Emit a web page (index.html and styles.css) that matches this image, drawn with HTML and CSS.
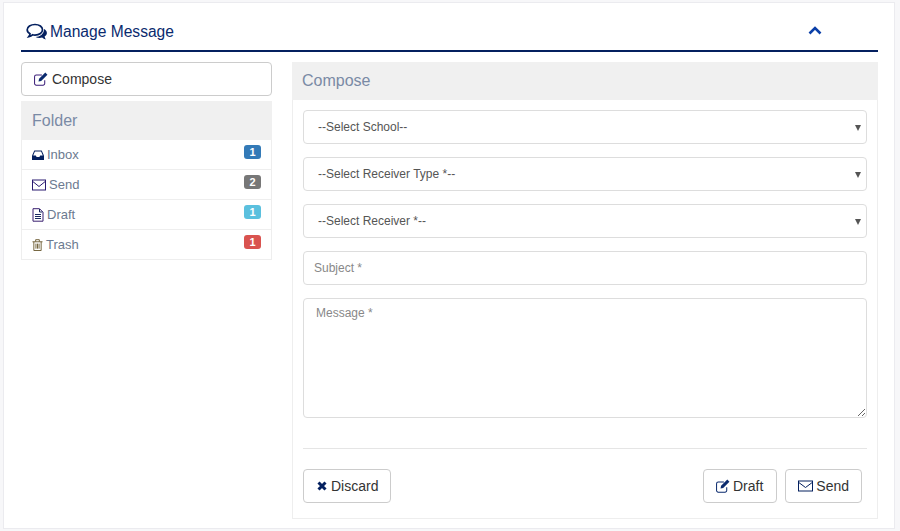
FILE: index.html
```html
<!DOCTYPE html>
<html lang="en">
<head>
    <meta charset="UTF-8">
    <title>Manage Message</title>
    <link rel="stylesheet" href="styles.css">
</head>
<body>
    <main class="card">
        <header class="card-head">
            <h1 class="card-title">
                <svg class="ico-title" viewBox="0 0 22 18"><path d="M9 1.500c4.400 0 7.500 2.400 7.500 5.300s-3.100 5.300-7.500 5.300c-.9 0-1.700-.1-2.500-.3-1 .9-2.200 1.500-3.700 1.800.7-.9 1.100-1.800 1.200-2.800C2.400 9.900 1.200 8.500 1.200 6.800 1.200 3.900 4.600 1.500 9 1.500z" fill="none" stroke="#04205f" stroke-width="1.700"/><path d="M18 6c1.800 1 2.900 2.400 2.900 4 0 1.500-.9 2.700-2.300 3.600.1 1 .6 2 1.300 2.900-1.500-.3-2.800-1-3.800-1.900-.8.200-1.600.3-2.400.3-1.600 0-3-.4-4.100-1 4 0 8.500-2.600 8.400-7.900z" fill="#04205f"/></svg>
                Manage Message
            </h1>
            <svg class="ico-up" viewBox="0 0 14 9"><path d="M1.500 7.500 7 2l5.500 5.500" fill="none" stroke="#0b3fa8" stroke-width="2.600"/></svg>
        </header>

        <div class="columns">
            <aside class="side">
                <a class="btn btn-block">
                    <svg class="ico" viewBox="1 .8 12.400 12.400"><path d="M10.500 8v3a1.500 1.500 0 0 1-1.500 1.500H3A1.500 1.500 0 0 1 1.500 11V5A1.500 1.500 0 0 1 3 3.500h5" fill="none" stroke="#3a1d78" stroke-width=".9"/><path d="M5.500 6.800 11 1.300l1.900 1.900-5.500 5.500-2.400.5z" fill="#0a2a6e"/></svg>
                    Compose
                </a>
                <div class="panel-title">Folder</div>
                <ul class="folders">
                    <li class="folder">
                        <svg class="ico-inbox" viewBox="1 2 12 10"><path d="M3.300 2.500h7.400L13 7.800V12H1V7.800z" fill="#04205f"/><path d="M3.900 3.600h6.200l1.700 4H9.200l-.8 1.500H5.600l-.8-1.500H2.200z" fill="#fff"/></svg>
                        <span>Inbox</span><b class="badge badge-blue">1</b>
                    </li>
                    <li class="folder">
                        <svg class="ico" viewBox="0 0 14 14"><rect x=".5" y="2" width="13" height="10" fill="none" stroke="#2a1a70"/><path d="M.8 3.500 7 8.500l6.200-5" fill="none" stroke="#2a1a70"/></svg>
                        <span>Send</span><b class="badge badge-grey">2</b>
                    </li>
                    <li class="folder">
                        <svg class="ico ico-file" viewBox="0 0 12 14"><path d="M1 .7h6.500L11 4.200v9H1z" fill="none" stroke="#3a2070"/><path d="M7.500 1v3h3M3 6.500h6M3 8.500h6M3 10.500h6" fill="none" stroke="#1a2a60"/></svg>
                        <span>Draft</span><b class="badge badge-cyan">1</b>
                    </li>
                    <li class="folder">
                        <svg class="ico ico-trash" viewBox="0 0 12 14"><path d="M.5 3.500h11M4 3.300V1.200h4v2.100M2 3.500V13h8V3.500M4.300 5.500v5.500M6 5.500v5.500M7.700 5.500v5.500" fill="none" stroke="#6a5a30"/></svg>
                        <span>Trash</span><b class="badge badge-red">1</b>
                    </li>
                </ul>
            </aside>

            <section class="compose">
                <div class="panel-title panel-title-wide">Compose</div>
                <form class="compose-form">
                    <div class="select-wrap">
                        <select class="field"><option>--Select School--</option></select>
                    </div>
                    <div class="select-wrap">
                        <select class="field"><option>--Select Receiver Type *--</option></select>
                    </div>
                    <div class="select-wrap">
                        <select class="field"><option>--Select Receiver *--</option></select>
                    </div>
                    <input class="field field-text" type="text" placeholder="Subject *">
                    <textarea class="field field-area" placeholder="Message *"></textarea>
                    <hr class="divider">
                    <div class="actions">
                        <button class="btn" type="button">
                            <svg class="ico-x" viewBox="0 0 12 12"><path d="M2.500 2.500l7 7M9.500 2.500l-7 7" fill="none" stroke="#04205f" stroke-width="3"/></svg>
                            Discard
                        </button>
                        <div class="actions-right">
                            <button class="btn btn-draft" type="button">
                                <svg class="ico" viewBox="1 .8 12.400 12.400"><path d="M10.500 8v3a1.500 1.500 0 0 1-1.500 1.500H3A1.500 1.500 0 0 1 1.500 11V5A1.500 1.500 0 0 1 3 3.500h5" fill="none" stroke="#0a2a6e" stroke-width=".9"/><path d="M5.500 6.800 11 1.300l1.900 1.900-5.500 5.500-2.400.5z" fill="#0a2a6e"/></svg>
                                Draft
                            </button>
                            <button class="btn" type="button">
                                <svg class="ico ico-wide" viewBox="0 0 15 14"><rect x=".5" y="2" width="14" height="10" fill="none" stroke="#04205f"/><path d="M.8 3.500 7.500 8.500l6.700-5" fill="none" stroke="#04205f"/></svg>
                                Send
                            </button>
                        </div>
                    </div>
                </form>
            </section>
        </div>
    </main>
</body>
</html>
```

FILE: styles.css
```css
* {
    box-sizing: border-box;
}
body {
    font-family: "Liberation Sans", Arial, sans-serif;
    font-size: 14px;
    color: #333;
    background-color: #f7f7f9;
    margin: 0;
    padding: 2px 5px 2px 3px;
}
.card {
    background-color: white;
    height: 527px;
    padding: 0 16px 0 17px;
    border: 1px solid #ebebef;
}
.card-head {
    display: flex;
    align-items: center;
    justify-content: space-between;
    height: 49px;
    padding: 10px 56px 0 5px;
    border-bottom: 2px solid #04205f;
}
.card-title {
    display: flex;
    align-items: center;
    gap: 2px;
    margin: 0;
    font-size: 15.6px;
    font-weight: normal;
    color: #0a2a6e;
}
.ico-title {
    width: 22px;
    height: 18px;
}
.ico-up {
    width: 14px;
    height: 9px;
    margin-bottom: 3px;
}
.columns {
    display: flex;
    gap: 20px;
    margin-top: 10px;
}
.side {
    width: 251px;
}
.compose {
    flex: 1;
    height: 457px;
    border: 1px solid #eeeeee;
    border-top: none;
}
.btn {
    display: inline-flex;
    align-items: center;
    gap: 3px;
    height: 34px;
    padding: 0 12px;
    font-family: inherit;
    font-size: 14px;
    color: #333;
    background-color: white;
    border: 1px solid #ccc;
    border-radius: 4px;
}
.btn-block {
    display: flex;
    gap: 4px;
    width: 100%;
}
.btn-draft {
    padding-right: 13px;
}
.ico {
    width: 14px;
    height: 14px;
}
.ico-wide {
    width: 15px;
}
.ico-file {
    width: 12px;
}
.ico-inbox {
    width: 12px;
    height: 10px;
}
.ico-trash {
    width: 11px;
}
.ico-x {
    width: 12px;
    height: 12px;
}
.panel-title {
    height: 39px;
    margin-top: 5px;
    padding-left: 11px;
    font-size: 16px;
    line-height: 39px;
    color: #7a8aa5;
    background-color: #f0f0f0;
}
.panel-title-wide {
    height: 38px;
    margin: 0 -1px;
    padding-left: 10px;
    line-height: 38px;
}
.folders {
    list-style: none;
    margin: 0;
    padding: 0;
    border: 1px solid #eeeeee;
    border-top: none;
}
.folder {
    display: flex;
    align-items: center;
    gap: 3px;
    height: 30px;
    padding: 0 10px;
    font-size: 13px;
    color: #6c7a90;
    border-top: 1px solid #eeeeee;
}
.folder:first-child {
    height: 29px;
    border-top: none;
}
.badge {
    margin-left: auto;
    margin-bottom: 6px;
    width: 17px;
    height: 14px;
    font-size: 11px;
    line-height: 14px;
    text-align: center;
    color: white;
    border-radius: 3px;
}
.badge-blue {
    background-color: #337ab7;
}
.badge-grey {
    background-color: #777;
}
.badge-cyan {
    background-color: #5bc0de;
}
.badge-red {
    background-color: #d9534f;
}
.compose-form {
    display: flex;
    flex-direction: column;
    gap: 13px;
    padding: 10px 10px 0;
}
.select-wrap {
    position: relative;
}
.select-wrap::after {
    content: "";
    position: absolute;
    top: 15px;
    right: 6px;
    border-left: 3px solid transparent;
    border-right: 3px solid transparent;
    border-top: 6px solid #555;
}
.field {
    display: block;
    width: 100%;
    height: 34px;
    padding: 0 14px;
    font-family: inherit;
    font-size: 12px;
    color: #555;
    background-color: white;
    border: 1px solid #ddd;
    border-radius: 4px;
    outline: none;
    appearance: none;
}
.field-text {
    padding: 0 10px;
}
.field-area {
    height: 120px;
    padding: 7px 12px;
    appearance: auto;
}
.field::placeholder {
    color: #888;
}
.divider {
    width: 100%;
    margin: 17px 0 7px;
    border: none;
    border-top: 1px solid #e5e5e5;
}
.actions {
    display: flex;
    justify-content: space-between;
    padding-right: 5px;
}
.actions-right {
    display: flex;
    gap: 8px;
}
```
